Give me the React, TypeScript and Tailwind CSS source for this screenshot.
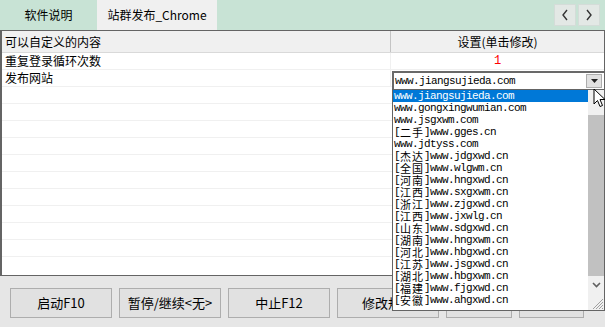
import React from 'react';

const SITES: { tag?: string; url: string }[] = [
  { url: 'www.jiangsujieda.com' },
  { url: 'www.gongxingwumian.com' },
  { url: 'www.jsgxwm.com' },
  { tag: '二手', url: 'www.gges.cn' },
  { url: 'www.jdtyss.com' },
  { tag: '杰达', url: 'www.jdgxwd.cn' },
  { tag: '全国', url: 'www.wlgwm.cn' },
  { tag: '河南', url: 'www.hngxwd.cn' },
  { tag: '江西', url: 'www.sxgxwm.cn' },
  { tag: '浙江', url: 'www.zjgxwd.cn' },
  { tag: '江西', url: 'www.jxwlg.cn' },
  { tag: '山东', url: 'www.sdgxwd.cn' },
  { tag: '湖南', url: 'www.hngxwm.cn' },
  { tag: '河北', url: 'www.hbgxwd.cn' },
  { tag: '江苏', url: 'www.jsgxwd.cn' },
  { tag: '湖北', url: 'www.hbgxwm.cn' },
  { tag: '福建', url: 'www.fjgxwd.cn' },
  { tag: '安徽', url: 'www.ahgxwd.cn' },
];

const ui = "font-['Noto_Sans_CJK_SC','Noto_Sans',sans-serif]";
const mono = "inline-block h-[12px] font-['Liberation_Mono','Noto_Sans_CJK_SC',monospace] text-[11px] leading-[12px] tracking-[-0.6px]";

const SiteText: React.FC<{ tag?: string; url: string }> = ({ tag, url }) => (
  <span className="flex h-[12px] items-center whitespace-nowrap leading-[12px]">
    {tag && (
      <>
        <span className={mono}>[</span>
        <span className={`${ui} inline-block h-[12px] text-[11px] leading-[12px] tracking-[1px]`}>{tag}</span>
        <span className={mono}>]</span>
      </>
    )}
    <span className={mono}>{url}</span>
  </span>
);

const App: React.FC = () => {
  const buttons = ['启动F10', '暂停/继续<无>', '中止F12', '修改规则', '', ''];
  const widths = ['w-[102px]', 'w-[102px]', 'w-[102px]', 'w-[102px]', 'w-[66px]', 'w-[65px]'];

  return (
    <div className={`relative w-[605px] h-[327px] overflow-hidden bg-[#e6e6e6] text-[12px] text-black ${ui}`}>
      {/* tab bar */}
      <div className="flex h-[30px] bg-[#c8e3d5]">
        <div className="flex w-[97px] items-center justify-center">软件说明</div>
        <div className="flex w-[120px] items-center justify-center bg-[#f0f0f0]">站群发布_Chrome</div>
        <div className="flex-1" />
        <div className="flex gap-[2px] pt-[4px] pr-[5px]">
          {[0, 1].map((i) => (
            <div key={i} className="flex h-[22px] w-[22px] items-center justify-center border border-[#d4dcd8] bg-[#e3e8e5]">
              <svg width="8" height="12" viewBox="0 0 8 12">
                <path d={i === 0 ? 'M6 1 L2 6 L6 11' : 'M2 1 L6 6 L2 11'} fill="none" stroke="#333" strokeWidth="1.4" />
              </svg>
            </div>
          ))}
        </div>
      </div>

      {/* grid */}
      <div className="h-[246px] border border-l-2 border-[#646464] bg-white">
        <div className="flex h-[22px] border-b border-[#d9d9d9] bg-[#f0f0f0]">
          <div className="flex w-[389px] items-center border-r border-[#c4c4c4] pl-[3px]">可以自定义的内容</div>
          <div className="flex flex-1 items-center justify-center">设置(单击修改)</div>
        </div>
        <div className="flex h-[17px] border-b border-[#f0f0f0]">
          <div className="flex w-[389px] items-center border-r border-[#f0f0f0] pl-[3px]">重复登录循环次数</div>
          <div className="flex flex-1 items-center justify-center text-[#ff0000] font-['Liberation_Mono',monospace]">1</div>
        </div>
        <div className="flex h-[17px] border-b border-[#f0f0f0]">
          <div className="flex w-[389px] items-center border-r border-[#f0f0f0] pl-[3px]">发布网站</div>
          <div className="flex-1" />
        </div>
        {Array.from({ length: 10 }).map((_, i) => (
          <div key={i} className="h-[17px] border-b border-[#f0f0f0]" />
        ))}
      </div>

      {/* buttons */}
      <div className="flex gap-[7px] pl-[10px] pt-[12px]">
        {buttons.map((b, i) => (
          <div key={i} className={`flex h-[30px] ${widths[i]} items-center justify-center border border-[#adadad] bg-[#e1e1e1] text-[13px]`}>
            {b}
          </div>
        ))}
      </div>

      {/* combobox */}
      <div className="absolute left-[392px] top-[71px] flex h-[18px] w-[212px] items-center border-l-2 border-t-2 border-[#696969] bg-white pl-[1px]">
        <SiteText url="www.jiangsujieda.com" />
        <div className="ml-auto mr-[2px] flex h-[14px] w-[16px] items-center justify-center border border-[#adadad] bg-[#e1e1e1]">
          <svg width="7" height="4" viewBox="0 0 7 4">
            <path d="M0 0 H7 L3.5 4 Z" fill="#222" />
          </svg>
        </div>
      </div>

      {/* dropdown list */}
      <div className="absolute left-[392px] top-[89px] flex h-[222px] w-[213px] border border-[#646464] bg-white">
        <div className="flex-1">
          {SITES.map((s, i) => (
            <div
              key={i}
              className={`flex h-[12px] items-center pl-[1px] ${i === 0 ? 'bg-[#0078d7] text-white' : ''}`}
            >
              <SiteText tag={s.tag} url={s.url} />
            </div>
          ))}
        </div>
        <div className="flex w-[16px] flex-col bg-[#f0f0f0]">
          <div className="h-[25px]" />
          <div className="h-[161px] bg-[#c1c1c1]" />
          <div className="flex h-[18px] items-center justify-center">
            <svg width="9" height="6" viewBox="0 0 9 6">
              <path d="M1 1 L4.5 4.5 L8 1" fill="none" stroke="#606060" strokeWidth="1.6" />
            </svg>
          </div>
          <div className="flex flex-1 items-end justify-end">
            <svg width="14" height="14" viewBox="0 0 14 14">
              <path d="M13 3 L3 13 M13 6 L6 13 M13 9 L9 13 M13 12 L12 13" stroke="#a0a0a0" strokeWidth="1" />
            </svg>
          </div>
        </div>
      </div>

      {/* mouse cursor */}
      <svg className="absolute left-[593px] top-[88px]" width="13" height="21" viewBox="0 0 13 21">
        <path d="M1 1 L1 16 L4.5 12.5 L7 18.5 L9.5 17.5 L7 11.5 L12 11.5 Z" fill="#fff" stroke="#000" strokeWidth="1" />
      </svg>
    </div>
  );
};

export default App;
